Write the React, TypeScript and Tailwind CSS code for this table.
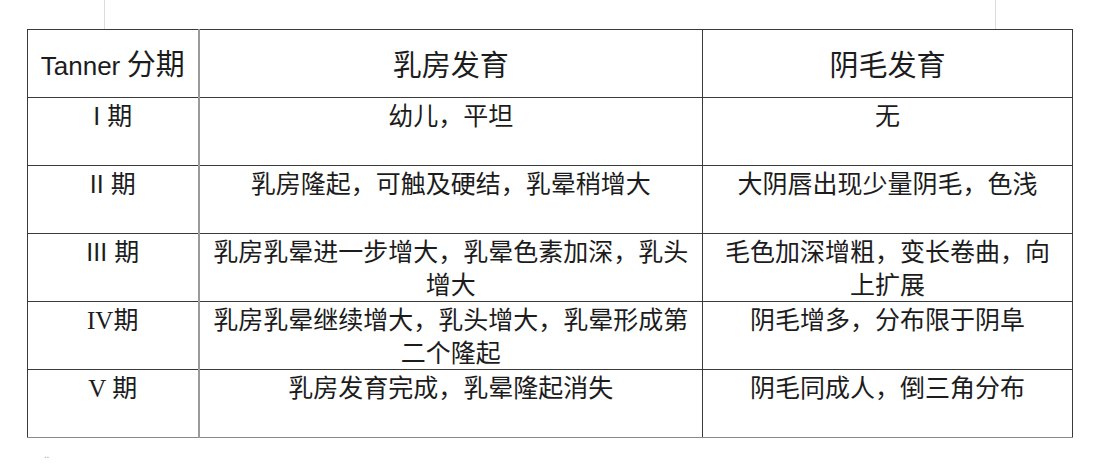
import React from 'react';

const cjk = "font-['Noto_Sans_CJK_SC',sans-serif]";

type Row = { stage: React.ReactNode; breast: string; hair: string };

const rows: Row[] = [
  {
    stage: <span className="font-['Liberation_Sans',sans-serif]">I </span>,
    breast: '幼儿，平坦',
    hair: '无',
  },
  {
    stage: <span className="font-['Liberation_Sans',sans-serif]">II </span>,
    breast: '乳房隆起，可触及硬结，乳晕稍增大',
    hair: '大阴唇出现少量阴毛，色浅',
  },
  {
    stage: <span className="font-['Liberation_Sans',sans-serif]">III </span>,
    breast: '乳房乳晕进一步增大，乳晕色素加深，乳头增大',
    hair: '毛色加深增粗，变长卷曲，向上扩展',
  },
  {
    stage: <span className="font-['Liberation_Serif',serif]">IV</span>,
    breast: '乳房乳晕继续增大，乳头增大，乳晕形成第二个隆起',
    hair: '阴毛增多，分布限于阴阜',
  },
  {
    stage: <span className="font-['Liberation_Serif',serif]">V </span>,
    breast: '乳房发育完成，乳晕隆起消失',
    hair: '阴毛同成人，倒三角分布',
  },
];

export default function TannerTable() {
  return (
    <div className={`h-[465px] w-[1107px] overflow-hidden bg-white text-[#1c1c1c] ${cjk}`}>
      <div className="flex h-[29px]">
        <div className="ml-[104px] h-full w-px bg-[#dcdcdc]" />
        <div className="ml-[890px] h-full w-px bg-[#dcdcdc]" />
      </div>

      <table className="ml-[27px] w-[1046px] table-fixed border-collapse">
        <colgroup>
          <col className="w-[171px]" />
          <col className="w-[504px]" />
          <col className="w-[370px]" />
        </colgroup>
        <thead>
          <tr className="h-[68px]">
            <th className="border border-[#3a3a3a] border-r-2 border-r-[#9a9a9a] px-[6px] text-center align-middle font-normal">
              <span className="font-['Liberation_Sans',sans-serif] text-[26px]">Tanner</span>
              <span className="text-[29px]"> 分期</span>
            </th>
            <th className="border border-[#3a3a3a] text-center align-middle text-[29px] font-normal">
              乳房发育
            </th>
            <th className="border border-[#3a3a3a] text-center align-middle text-[29px] font-normal">
              阴毛发育
            </th>
          </tr>
        </thead>
        <tbody>
          {rows.map((r, i) => (
            <tr key={i} className="h-[68px]">
              <td
                className={`border border-[#3a3a3a] border-r-2 border-r-[#9a9a9a] pt-0 text-center align-top text-[25px] leading-[33px] ${
                  i === rows.length - 1 ? 'border-b-[#8a8a8a]' : ''
                }`}
              >
                {r.stage}期
              </td>
              <td
                className={`border border-[#3a3a3a] px-[12px] pt-0 text-center align-top text-[25px] leading-[33px] ${
                  i === rows.length - 1 ? 'border-b-[#8a8a8a]' : ''
                }`}
              >
                {r.breast}
              </td>
              <td
                className={`border border-[#3a3a3a] px-[10px] pt-0 text-center align-top text-[25px] leading-[33px] ${
                  i === rows.length - 1 ? 'border-b-[#8a8a8a]' : ''
                }`}
              >
                {r.hair}
              </td>
            </tr>
          ))}
        </tbody>
      </table>

      <div className="ml-[43px] mt-[17px] text-[12px] leading-none text-[#9a9a9a]">¨</div>
    </div>
  );
}
